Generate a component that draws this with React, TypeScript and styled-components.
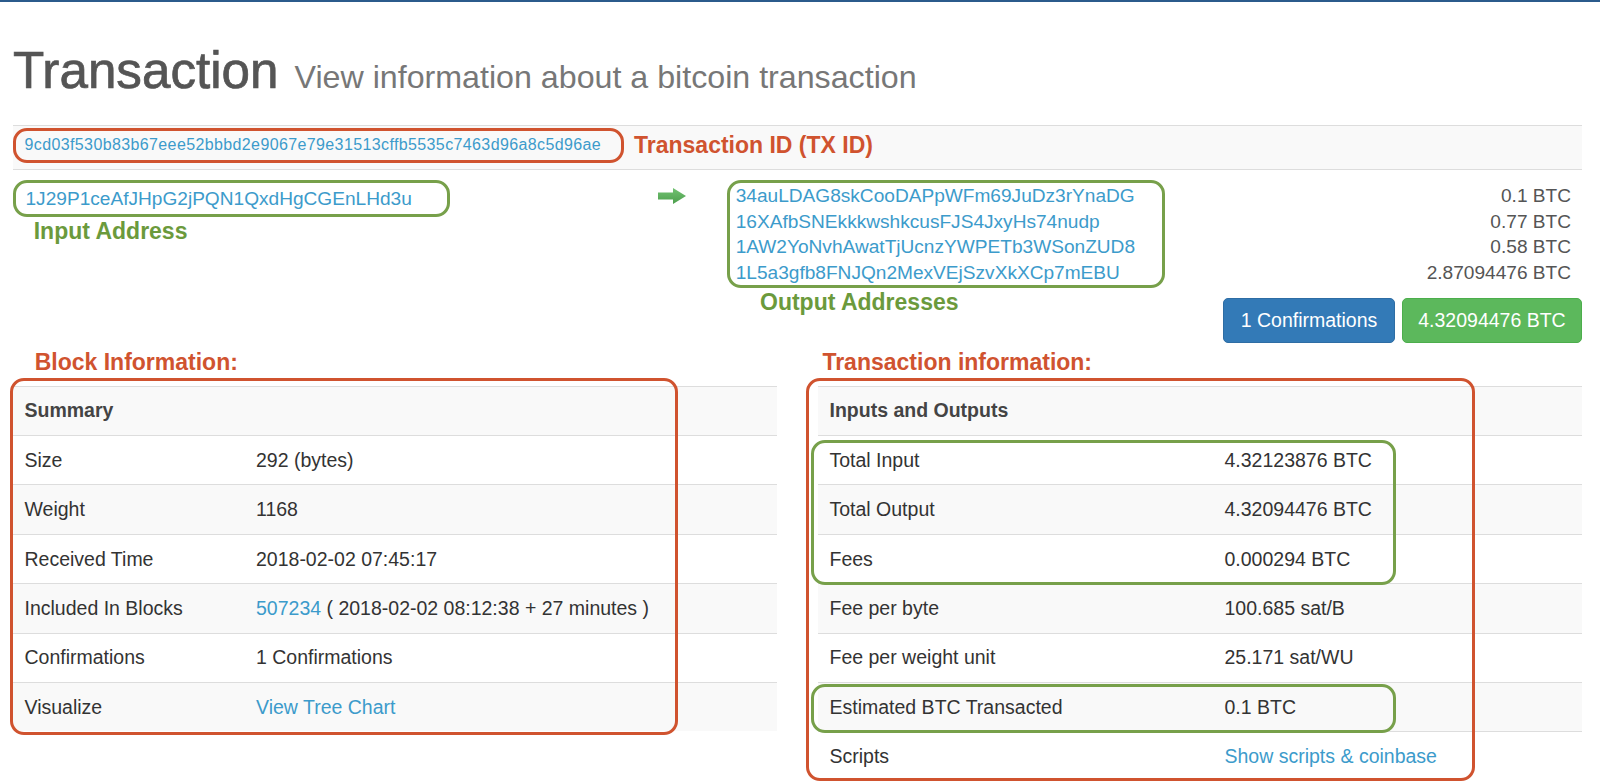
import React from "react";
import styled, { createGlobalStyle, css } from "styled-components";

const RED = "#d0532f";
const GREEN_LINE = "#77a04a";
const GREEN_TEXT = "#6b9a3c";
const LINK = "#3c9bcb";

const GlobalStyle = createGlobalStyle`
  html, body { margin: 0; padding: 0; background: #fff; }
  body {
    border-top: 2px solid #2b5b8c;
    font-family: "Liberation Sans", Arial, Helvetica, sans-serif;
    color: #333;
    font-size: 19.5px;
  }
  * { box-sizing: border-box; }
`;

const Page = styled.div`
  width: 1600px;
  height: 782px;
  overflow: hidden;
  padding: 0 18px 0 13px;
`;

const Header = styled.header`
  display: flex;
  align-items: baseline;
  gap: 16px;
  height: 122.5px;
  padding-top: 43.8px;
`;

const Title = styled.h1`
  margin: 0;
  font-size: 51.2px;
  line-height: 50px;
  font-weight: 400;
  color: #555;
  -webkit-text-stroke: 0.7px #555;
`;

const Subtitle = styled.span`
  font-size: 32.2px;
  line-height: 50px;
  color: #777;
`;

const TxRow = styled.div`
  display: flex;
  align-items: flex-start;
  gap: 10.5px;
  height: 45px;
  padding-top: 2px;
  border-top: 1px solid #ddd;
  border-bottom: 1px solid #ddd;
  background: #f9f9f9;
`;

const outline = (color: string) => css`
  border: 3px solid ${color};
  border-radius: 14px;
`;

const TxIdBox = styled.div`
  ${outline(RED)};
  width: 610.5px;
  height: 35.5px;
  padding-left: 8.5px;
  display: flex;
  align-items: center;
  font-size: 16px;
  letter-spacing: 0.38px;
  color: ${LINK};
`;

const Note = styled.div<{ $color: string; $indent?: number }>`
  font-size: 23px;
  font-weight: 700;
  line-height: 26px;
  color: ${(p) => p.$color};
  padding-left: ${(p) => p.$indent ?? 0}px;
`;

const TxNote = styled(Note)`
  line-height: 35.5px;
`;

const FlowRow = styled.div`
  display: grid;
  grid-template-columns: 645px 68.5px 1fr auto;
  padding-top: 10.5px;
`;

const FlowCol = styled.div`
  display: flex;
  flex-direction: column;
  align-items: flex-start;
`;

const AddressBox = styled.div<{ $width: number; $pad: number }>`
  ${outline(GREEN_LINE)};
  width: ${(p) => p.$width}px;
  padding: 0 0 0 ${(p) => p.$pad}px;
  display: flex;
  flex-direction: column;
  justify-content: center;
`;

const InputBox = styled(AddressBox)`
  height: 36.5px;
`;

const Address = styled.a`
  color: ${LINK};
  text-decoration: none;
  font-size: 19.1px;
  line-height: 25.5px;
  white-space: nowrap;
`;

const BoxNote = styled(Note)`
  margin-top: 1px;
`;

const ArrowWrap = styled.div`
  padding-top: 8px;
  svg { display: block; }
`;

const AmountCol = styled.div`
  display: flex;
  flex-direction: column;
  align-items: flex-end;
`;

const Amounts = styled.div`
  padding: 3px 11px 0 0;
  text-align: right;
  color: #555;
  font-size: 19.1px;
  line-height: 25.5px;
`;

const Buttons = styled.div`
  display: flex;
  gap: 7px;
  margin-top: 13px;
`;

const Badge = styled.button<{ $bg: string; $border: string; $width: number }>`
  height: 45px;
  width: ${(p) => p.$width}px;
  border: 1px solid ${(p) => p.$border};
  background: ${(p) => p.$bg};
  color: #fff;
  border-radius: 5px;
  font-family: inherit;
  font-size: 19.5px;
  padding: 0;
  display: flex;
  align-items: center;
  justify-content: center;
`;

const Columns = styled.div`
  display: grid;
  grid-template-columns: 764px 764px;
  column-gap: 41px;
  margin-top: 6px;
`;

const Section = styled.section`
  display: flex;
  flex-direction: column;
`;

type Frame = { left: number; top: number; width: number; height: number };

const framed = (color: string) => css<{ $frame: Frame }>`
  position: relative;
  &::after {
    content: "";
    position: absolute;
    left: ${(p) => p.$frame.left}px;
    top: ${(p) => p.$frame.top}px;
    width: ${(p) => p.$frame.width}px;
    height: ${(p) => p.$frame.height}px;
    border: 3px solid ${color};
    border-radius: 14px;
    pointer-events: none;
    box-sizing: border-box;
  }
`;

const Table = styled.div<{ $frame: Frame }>`
  margin-top: 10.7px;
  ${framed(RED)};
`;

const Highlight = styled.div<{ $frame: Frame }>`
  ${framed(GREEN_LINE)};
`;

const Row = styled.div<{ $label: number; $striped: boolean; $head?: boolean }>`
  display: grid;
  grid-template-columns: ${(p) => p.$label}px 1fr;
  align-items: center;
  height: 49.4px;
  padding-left: 11.5px;
  border-top: 1px solid #ddd;
  background: ${(p) => (p.$striped ? "#f9f9f9" : "#fff")};
  font-weight: ${(p) => (p.$head ? 700 : 400)};
  color: ${(p) => (p.$head ? "#444" : "#333")};
  white-space: nowrap;
`;

const Cell = styled.div``;

const Link = styled.a`
  color: ${LINK};
  text-decoration: none;
`;

const Arrow = () => (
  <svg width="28" height="16" viewBox="0 0 28 16">
    <defs>
      <linearGradient id="ag" x1="0" y1="0" x2="0" y2="1">
        <stop offset="0" stopColor="#72c272" />
        <stop offset="1" stopColor="#4d9f4d" />
      </linearGradient>
    </defs>
    <path d="M0 4.5 H15 V0 L28 8 L15 16 V11.5 H0 Z" fill="url(#ag)" />
  </svg>
);

type RowData = { label: string; value?: React.ReactNode; head?: boolean };

const blockRows: RowData[] = [
  { label: "Summary", head: true },
  { label: "Size", value: "292 (bytes)" },
  { label: "Weight", value: "1168" },
  { label: "Received Time", value: "2018-02-02 07:45:17" },
  {
    label: "Included In Blocks",
    value: (
      <>
        <Link>507234</Link> ( 2018-02-02 08:12:38 + 27 minutes )
      </>
    ),
  },
  { label: "Confirmations", value: "1 Confirmations" },
  { label: "Visualize", value: <Link>View Tree Chart</Link> },
];

const txRows: RowData[] = [
  { label: "Inputs and Outputs", head: true },
  { label: "Total Input", value: "4.32123876 BTC" },
  { label: "Total Output", value: "4.32094476 BTC" },
  { label: "Fees", value: "0.000294 BTC" },
  { label: "Fee per byte", value: "100.685 sat/B" },
  { label: "Fee per weight unit", value: "25.171 sat/WU" },
  { label: "Estimated BTC Transacted", value: "0.1 BTC" },
  { label: "Scripts", value: <Link>Show scripts &amp; coinbase</Link> },
];

const renderRow = (r: RowData, i: number, label: number) => (
  <Row key={r.label} $label={label} $striped={i % 2 === 0} $head={r.head}>
    <Cell>{r.label}</Cell>
    <Cell>{r.value}</Cell>
  </Row>
);

const outputs = [
  ["34auLDAG8skCooDAPpWFm69JuDz3rYnaDG", "0.1 BTC"],
  ["16XAfbSNEkkkwshkcusFJS4JxyHs74nudp", "0.77 BTC"],
  ["1AW2YoNvhAwatTjUcnzYWPETb3WSonZUD8", "0.58 BTC"],
  ["1L5a3gfb8FNJQn2MexVEjSzvXkXCp7mEBU", "2.87094476 BTC"],
];

export default function App() {
  const L = 231.5;
  const R = 395;
  return (
    <>
      <GlobalStyle />
      <Page>
        <Header>
          <Title>Transaction</Title>
          <Subtitle>View information about a bitcoin transaction</Subtitle>
        </Header>

        <TxRow>
          <TxIdBox>9cd03f530b83b67eee52bbbd2e9067e79e31513cffb5535c7463d96a8c5d96ae</TxIdBox>
          <TxNote $color={RED}>Transaction ID (TX ID)</TxNote>
        </TxRow>

        <FlowRow>
          <FlowCol>
            <InputBox $width={437} $pad={9.5}>
              <Address>1J29P1ceAfJHpG2jPQN1QxdHgCGEnLHd3u</Address>
            </InputBox>
            <BoxNote $color={GREEN_TEXT} $indent={20.7}>
              Input Address
            </BoxNote>
          </FlowCol>
          <ArrowWrap>
            <Arrow />
          </ArrowWrap>
          <FlowCol>
            <AddressBox $width={438.5} $pad={6.2}>
              {outputs.map(([a]) => (
                <Address key={a}>{a}</Address>
              ))}
            </AddressBox>
            <BoxNote $color={GREEN_TEXT} $indent={33.5}>
              Output Addresses
            </BoxNote>
          </FlowCol>
          <AmountCol>
            <Amounts>
              {outputs.map(([a, v]) => (
                <div key={a}>{v}</div>
              ))}
            </Amounts>
            <Buttons>
              <Badge $bg="#337ab7" $border="#2e6da4" $width={172}>
                1 Confirmations
              </Badge>
              <Badge $bg="#5cb85c" $border="#4cae4c" $width={180}>
                4.32094476 BTC
              </Badge>
            </Buttons>
          </AmountCol>
        </FlowRow>

        <Columns>
          <Section>
            <Note $color={RED} $indent={21.7}>
              Block Information:
            </Note>
            <Table $frame={{ left: -3, top: -8.2, width: 667.5, height: 357.2 }}>
              {blockRows.map((r, i) => renderRow(r, i, L))}
            </Table>
          </Section>
          <Section>
            <Note $color={RED} $indent={4.4}>
              Transaction information:
            </Note>
            <Table $frame={{ left: -12, top: -8.2, width: 668.5, height: 403 }}>
              {renderRow(txRows[0], 0, R)}
              <Highlight $frame={{ left: -7, top: 4.9, width: 585, height: 145 }}>
                {txRows.slice(1, 4).map((r, i) => renderRow(r, i + 1, R))}
              </Highlight>
              {txRows.slice(4, 6).map((r, i) => renderRow(r, i + 4, R))}
              <Highlight $frame={{ left: -7, top: 1.6, width: 585, height: 49 }}>
                {renderRow(txRows[6], 6, R)}
              </Highlight>
              {renderRow(txRows[7], 7, R)}
            </Table>
          </Section>
        </Columns>
      </Page>
    </>
  );
}
